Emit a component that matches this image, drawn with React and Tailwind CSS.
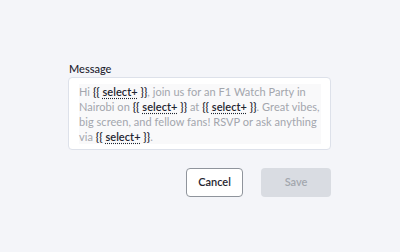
export default function App() {
  const Tok = () => (
    <span className="text-[#1f2530] font-semibold">
      {"{{ "}
      <span className="underline decoration-dotted decoration-[#1f2530] underline-offset-2">select+</span>
      {" }}"}
    </span>
  );
  return (
    <div className="w-[400px] h-[252px] bg-[#f4f5f9] pt-[62px]" style={{ fontFamily: "Lato, 'Noto Sans', sans-serif" }}>
      <div className="ml-[68px] w-[263px] flex flex-col">
        <div className="text-[11px] leading-[14px] font-medium text-[#1f2530] pl-[1px]">Message</div>
        <div className="mt-[1px] bg-white border border-[#dde1ea] rounded-[4px] pt-[6px] pb-[5px] pl-[10px] pr-[9px]">
          <div className="bg-[#f9f9fa] text-[11px] leading-[15px] text-[#a3a6ad] tracking-[0.05px]">
            Hi <Tok />, join us for an F1 Watch Party in Nairobi on <Tok /> at <Tok />. Great vibes, big screen, and fellow fans! RSVP or ask anything via <Tok />.
          </div>
        </div>
        <div className="mt-[18px] flex justify-end gap-[18px]">
          <button className="w-[57px] h-[29px] bg-white border border-[#8f949c] rounded-[4px] text-[11px] font-semibold text-[#1f2530]">Cancel</button>
          <button className="w-[70px] h-[29px] bg-[#d9dce2] rounded-[4px] text-[11px] font-semibold text-[#a3a7ae]">Save</button>
        </div>
      </div>
    </div>
  );
}
